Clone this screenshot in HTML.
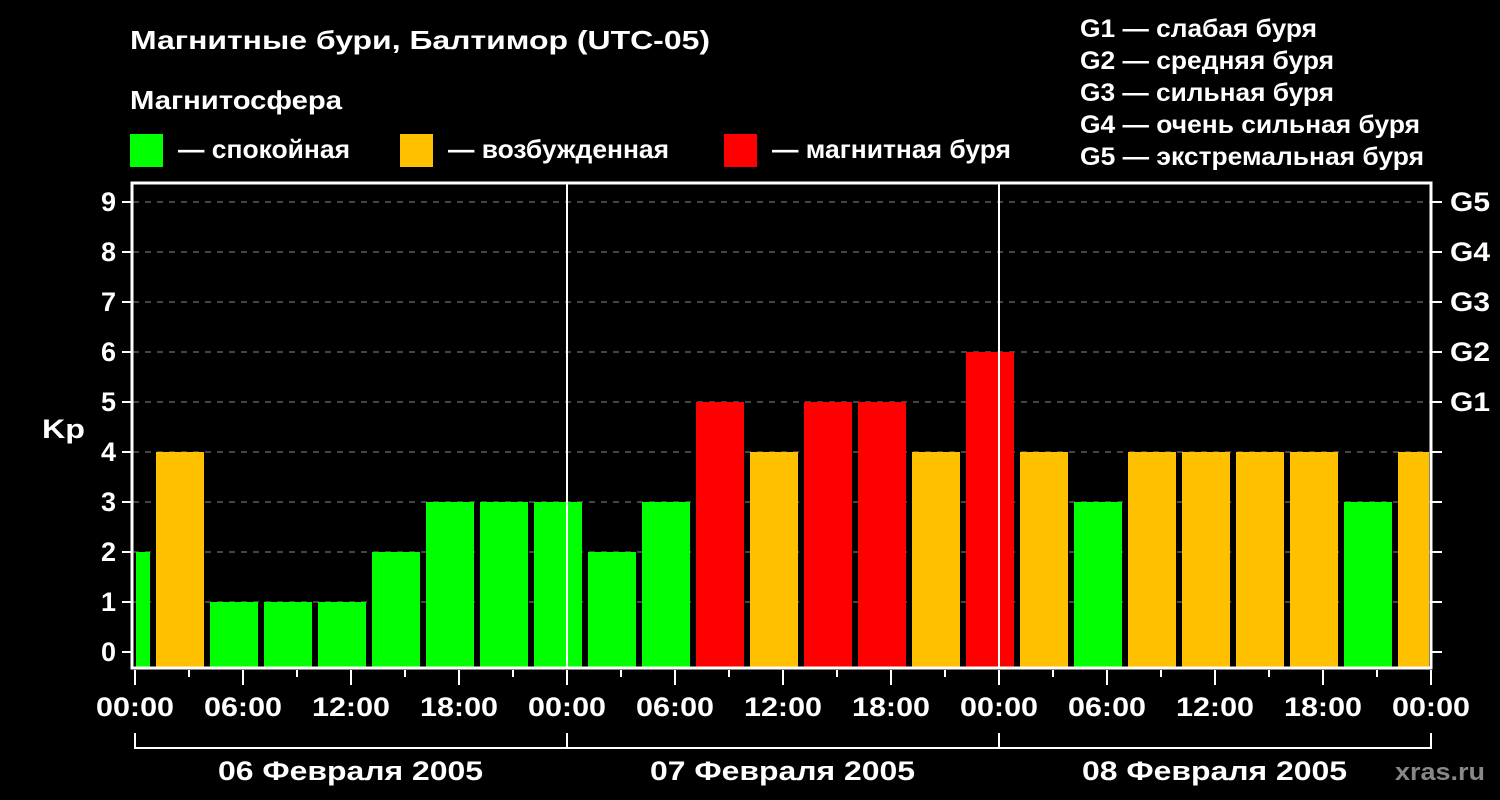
<!DOCTYPE html>
<html><head><meta charset="utf-8"><style>
body{margin:0;background:#000;width:1500px;height:800px;overflow:hidden}
svg{display:block}
text{font-family:"Liberation Sans",Arial,sans-serif;font-weight:bold;fill:#fff}
</style></head><body>
<svg width="1500" height="800" xmlns="http://www.w3.org/2000/svg">
<rect width="1500" height="800" fill="#000"/>
<text x="130" y="49" font-size="26" textLength="580" lengthAdjust="spacingAndGlyphs">Магнитные бури, Балтимор (UTC-05)</text>
<text x="130" y="109" font-size="26" textLength="212" lengthAdjust="spacingAndGlyphs">Магнитосфера</text>
<rect x="130" y="134" width="33" height="33" fill="#00ff00"/>
<text x="178" y="158" font-size="26" textLength="172" lengthAdjust="spacingAndGlyphs">— спокойная</text>
<rect x="400" y="134" width="33" height="33" fill="#ffc000"/>
<text x="448" y="158" font-size="26" textLength="221" lengthAdjust="spacingAndGlyphs">— возбужденная</text>
<rect x="724" y="134" width="33" height="33" fill="#ff0000"/>
<text x="772" y="158" font-size="26" textLength="239" lengthAdjust="spacingAndGlyphs">— магнитная буря</text>
<g font-size="25">
<text x="1080" y="37" textLength="237" lengthAdjust="spacingAndGlyphs">G1 — слабая буря</text>
<text x="1080" y="69" textLength="254" lengthAdjust="spacingAndGlyphs">G2 — средняя буря</text>
<text x="1080" y="101" textLength="254" lengthAdjust="spacingAndGlyphs">G3 — сильная буря</text>
<text x="1080" y="133" textLength="340" lengthAdjust="spacingAndGlyphs">G4 — очень сильная буря</text>
<text x="1080" y="165" textLength="344" lengthAdjust="spacingAndGlyphs">G5 — экстремальная буря</text>
</g>
<g stroke="#888" stroke-width="1" stroke-dasharray="6,6">
<line x1="133" y1="202" x2="1430" y2="202"/><line x1="133" y1="252" x2="1430" y2="252"/>
<line x1="133" y1="302" x2="1430" y2="302"/><line x1="133" y1="352" x2="1430" y2="352"/>
<line x1="133" y1="402" x2="1430" y2="402"/><line x1="133" y1="452" x2="1430" y2="452"/>
<line x1="133" y1="502" x2="1430" y2="502"/><line x1="133" y1="552" x2="1430" y2="552"/>
<line x1="133" y1="602" x2="1430" y2="602"/>
</g>
<g id="bars"></g>
<line x1="567" y1="182" x2="567" y2="668" stroke="#fff" stroke-width="2"/>
<line x1="999" y1="182" x2="999" y2="668" stroke="#fff" stroke-width="2"/>
<rect x="132" y="183" width="1299" height="485" fill="none" stroke="#fff" stroke-width="3"/>
<g id="ticks" stroke="#fff" stroke-width="2"></g>
<g font-size="27" text-anchor="end">
<text x="116" y="211">9</text><text x="116" y="261">8</text><text x="116" y="311">7</text>
<text x="116" y="361">6</text><text x="116" y="411">5</text><text x="116" y="461">4</text>
<text x="116" y="511">3</text><text x="116" y="561">2</text><text x="116" y="611">1</text>
<text x="116" y="661">0</text>
</g>
<text x="42" y="438" font-size="27" textLength="43" lengthAdjust="spacingAndGlyphs">Kp</text>
<g font-size="27">
<text x="1450" y="211" textLength="40" lengthAdjust="spacingAndGlyphs">G5</text><text x="1450" y="261" textLength="40" lengthAdjust="spacingAndGlyphs">G4</text><text x="1450" y="311" textLength="40" lengthAdjust="spacingAndGlyphs">G3</text>
<text x="1450" y="361" textLength="40" lengthAdjust="spacingAndGlyphs">G2</text><text x="1450" y="411" textLength="40" lengthAdjust="spacingAndGlyphs">G1</text>
</g>
<g font-size="27" id="hours"></g>
<path d="M135 733V748H1431V733M567 733V748M999 733V748" fill="none" stroke="#fff" stroke-width="2"/>
<g font-size="27">
<text x="218" y="780" textLength="265" lengthAdjust="spacingAndGlyphs">06 Февраля 2005</text>
<text x="650" y="780" textLength="265" lengthAdjust="spacingAndGlyphs">07 Февраля 2005</text>
<text x="1082" y="780" textLength="265" lengthAdjust="spacingAndGlyphs">08 Февраля 2005</text>
</g>
<text x="1395" y="780" font-size="24" style="fill:#888" textLength="90" lengthAdjust="spacingAndGlyphs">xras.ru</text>
</svg>
<script>
var v=[2,4,1,1,1,2,3,3,3,2,3,5,4,5,5,4,6,4,3,4,4,4,4,3,4];
var ns="http://www.w3.org/2000/svg",b=document.getElementById('bars');
v.forEach(function(k,i){var l=102+54*i,r=l+48;l=Math.max(l,136);r=Math.min(r,1429);
var c=k<=3?'#00ff00':(k==4?'#ffc000':'#ff0000');var e=document.createElementNS(ns,'rect');
e.setAttribute('x',l);e.setAttribute('width',r-l);e.setAttribute('y',652-50*k);e.setAttribute('height',15+50*k);e.setAttribute('fill',c);b.appendChild(e);});
var t=document.getElementById('ticks'),h=document.getElementById('hours'),p='';
for(var k=0;k<=9;k++){var y=652-50*k;p+='M122 '+y+'H131M1432 '+y+'H1442';}
var lab=['00:00','06:00','12:00','18:00'];
for(var i=0;i<=24;i++){var x=135+54*i;p+='M'+x+' 670V'+(i%2?677:685);
if(i%2==0){var e=document.createElementNS(ns,'text');e.setAttribute('x',x-39);e.setAttribute('y',716);e.setAttribute('textLength',78);e.setAttribute('lengthAdjust','spacingAndGlyphs');e.textContent=lab[(i/2)%4];h.appendChild(e);}}
var pe=document.createElementNS(ns,'path');pe.setAttribute('d',p);t.appendChild(pe);
</script>
</body></html>
